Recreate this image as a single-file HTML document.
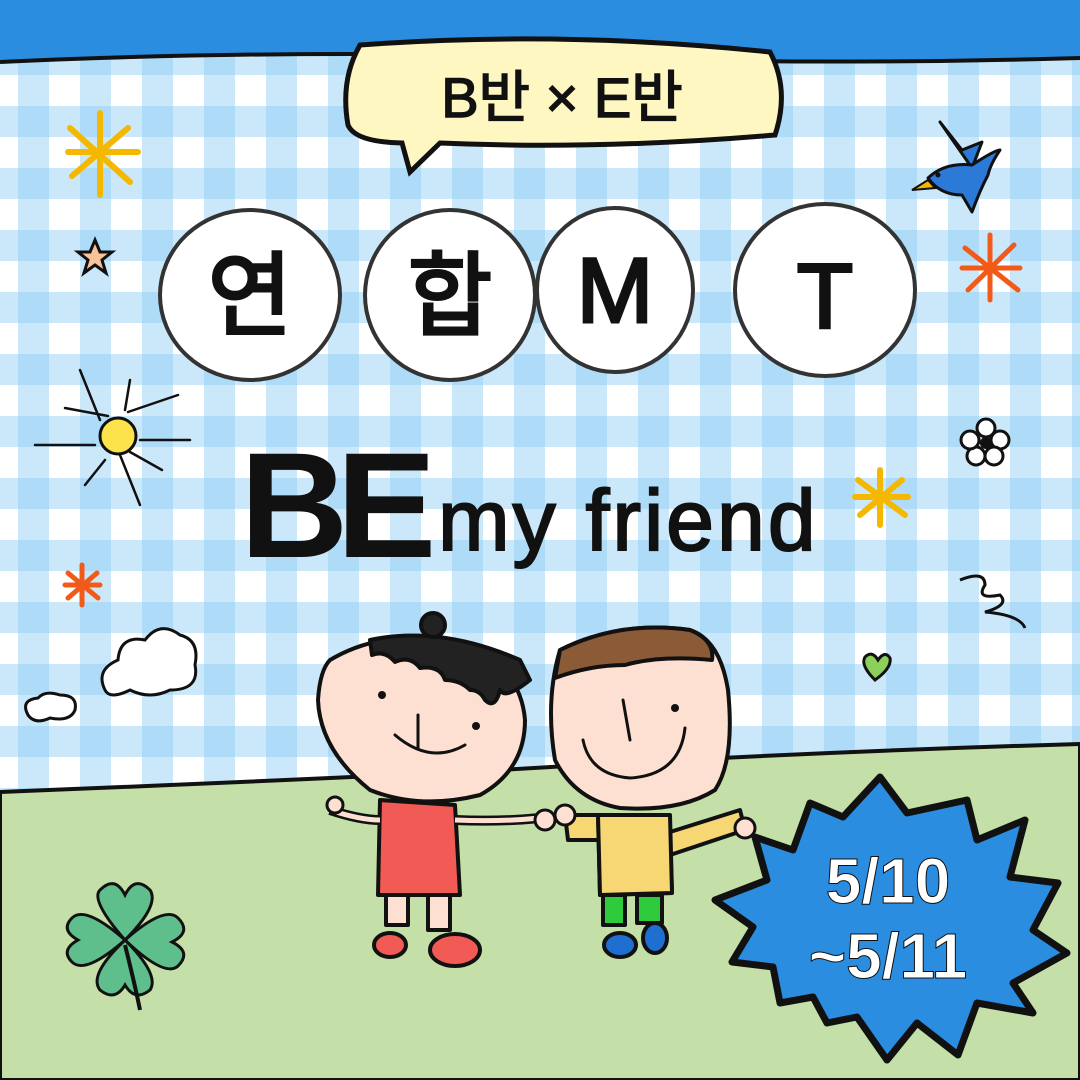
<!DOCTYPE html>
<html><head><meta charset="utf-8"><style>
html,body{margin:0;padding:0}
body{width:1080px;height:1080px;overflow:hidden;position:relative;font-family:"Liberation Sans","Noto Sans CJK KR",sans-serif}
.bg{position:absolute;inset:0;background-color:#fff;
background-image:
linear-gradient(90deg, rgba(140,205,245,.45) 0 31px, transparent 31px 62px),
linear-gradient(0deg, rgba(140,205,245,.45) 0 31px, transparent 31px 62px);
background-size:62px 62px,62px 62px;background-position:18px 0,0 13px}
svg{position:absolute;left:0;top:0}
</style></head><body>
<div class="bg"></div>
<svg width="1080" height="1080" viewBox="0 0 1080 1080">
<path d="M0 0H1080V58Q800 66 540 56Q250 50 0 62Z" fill="#2b8de0"/>
<path d="M0 62Q250 50 540 56Q800 66 1080 58" fill="none" stroke="#111" stroke-width="4"/>
<path d="M0 792Q300 780 500 770Q800 752 1080 744V1080H0Z" fill="#c4dfa8" stroke="#111" stroke-width="4"/>
<path d="M360 45Q560 30 770 52Q790 90 775 135Q600 150 440 143L410 172L402 143Q355 142 348 125Q340 80 360 45Z" fill="#fff7c2" stroke="#111" stroke-width="5"/>
<text x="562" y="117" font-size="56" text-anchor="middle" fill="#111" stroke="#111" stroke-width="1.5">B반 × E반</text>
<g fill="#fff" stroke="#333" stroke-width="4">
<ellipse cx="250" cy="295" rx="90" ry="85"/>
<ellipse cx="450" cy="295" rx="85" ry="85"/>
<ellipse cx="615" cy="290" rx="78" ry="82"/>
<ellipse cx="825" cy="290" rx="90" ry="86"/>
</g>
<g font-size="92" text-anchor="middle" fill="#111" stroke="#111" stroke-width="3">
<text x="250" y="328">연</text><text x="450" y="328">합</text>
<text x="615" y="322">M</text><text x="825" y="328">T</text>
</g>
<text x="240" y="557" font-size="150" font-weight="bold" fill="#111" letter-spacing="-12">BE</text>
<text x="438" y="550" font-size="86" fill="#111" letter-spacing="3" stroke="#111" stroke-width="2">my friend</text>
<g stroke="#f5b800" stroke-width="6" stroke-linecap="round">
<path d="M100 113V195M70 128L130 182M68 152H138M72 176L128 128"/>
<path d="M880 470V525M858 480L905 515M855 497H908M860 515L902 480"/>
</g>
<g stroke="#f25a1a" stroke-width="5" stroke-linecap="round">
<path d="M990 235V300M965 248L1018 290M962 268H1020M968 290L1014 245"/>
<path d="M82 565V605M68 573L98 598M65 585H100M68 598L97 573"/>
</g>
<path d="M95 240L100 252L112 252L102 260L106 273L95 265L84 273L88 260L78 252L90 252Z" fill="#f8c29a" stroke="#111" stroke-width="3"/>
<circle cx="118" cy="436" r="18" fill="#fde34b" stroke="#111" stroke-width="3"/>
<g stroke="#111" stroke-width="2.5" stroke-linecap="round"><path d="M35 445H95M140 440H190M128 412L178 395M130 452L162 470M120 455L140 505M105 460L85 485M100 420L80 370M125 410L130 380M108 416L65 408"/></g>
<!-- bird -->
<path d="M940 122L962 150L982 142L972 168Z" fill="#2b7ad8" stroke="#111" stroke-width="3" stroke-linejoin="round"/>
<path d="M928 178Q945 162 972 165Q995 150 1000 150Q990 165 988 175Q980 190 972 212L962 195Q940 195 928 178Z" fill="#2b7ad8" stroke="#111" stroke-width="3" stroke-linejoin="round"/>
<circle cx="938" cy="175" r="2.5" fill="#111"/>
<path d="M928 180L912 190L935 188Z" fill="#f5b800" stroke="#111" stroke-width="2"/>
<g fill="#fff" stroke="#111" stroke-width="3"><circle cx="986" cy="428" r="9"/><circle cx="1000" cy="440" r="9"/><circle cx="994" cy="456" r="9"/><circle cx="976" cy="456" r="9"/><circle cx="970" cy="440" r="9"/></g>
<circle cx="986" cy="443" r="6" fill="#111"/>
<path d="M960 580Q985 570 985 585Q975 600 1000 595Q1010 605 985 612Q1020 615 1025 628" fill="none" stroke="#111" stroke-width="3"/>
<path d="M875 680Q860 665 865 657Q872 650 878 660Q885 650 890 658Q892 668 875 680Z" fill="#8ccf5a" stroke="#111" stroke-width="3"/>
<path d="M105 690Q95 670 118 660Q120 635 145 640Q160 620 180 635Q200 640 195 665Q200 690 170 690Q150 700 130 690Q110 700 105 690Z" fill="#fff" stroke="#111" stroke-width="3"/>
<path d="M28 715Q20 700 38 698Q45 690 60 695Q78 695 75 710Q70 722 50 718Q35 725 28 715Z" fill="#fff" stroke="#111" stroke-width="3"/>
<g fill="#5fbf8c" stroke="#111" stroke-width="3">
<path d="M125 940Q90 900 100 890Q115 875 125 895Q135 875 150 890Q160 905 125 940Z"/>
<path d="M125 940Q165 905 178 918Q192 932 172 942Q192 952 178 966Q165 978 125 940Z"/>
<path d="M125 940Q160 975 150 990Q135 1002 125 985Q115 1002 100 990Q88 975 125 940Z"/>
<path d="M125 940Q85 975 72 962Q60 950 78 940Q60 930 72 918Q85 905 125 940Z"/>
</g>
<path d="M125 945Q135 985 140 1010" stroke="#111" stroke-width="4" fill="none"/>
<g stroke="#111" stroke-width="4" stroke-linejoin="round">
<path d="M380 800L455 805L460 895L378 895Z" fill="#f25a55"/>
<rect x="386" y="895" width="22" height="30" fill="#fde0d2"/><rect x="428" y="895" width="22" height="35" fill="#fde0d2"/>
<ellipse cx="390" cy="945" rx="16" ry="12" fill="#f25a55"/><ellipse cx="455" cy="950" rx="25" ry="16" fill="#f25a55"/>
<path d="M330 810Q360 820 380 820M455 820Q500 822 540 818" fill="none" stroke-width="10"/>
<path d="M330 810Q360 820 380 820M455 820Q500 822 540 818" fill="none" stroke="#fde0d2" stroke-width="5"/>
<path d="M330 660Q380 630 450 640Q520 660 525 720Q525 770 480 795Q420 810 370 790Q320 750 318 700Q320 670 330 660Z" fill="#fde0d2"/>
<path d="M370 640Q440 625 520 660L530 680Q505 700 500 690Q495 710 485 700Q480 690 470 690Q460 680 445 680Q440 665 420 668Q410 655 395 662Q385 650 372 655Z" fill="#222"/>
<circle cx="433" cy="625" r="12" fill="#222"/>
</g>
<g fill="none" stroke="#111" stroke-width="3" stroke-linecap="round"><path d="M395 735Q430 765 465 745M418 715V748"/></g>
<circle cx="382" cy="695" r="4" fill="#111"/><circle cx="476" cy="726" r="4" fill="#111"/>
<g stroke="#111" stroke-width="4" stroke-linejoin="round">
<rect x="603" y="895" width="22" height="30" fill="#2ecb3c"/><rect x="637" y="895" width="25" height="28" fill="#2ecb3c"/>
<ellipse cx="620" cy="945" rx="16" ry="12" fill="#1f6fd0"/><ellipse cx="655" cy="938" rx="12" ry="15" fill="#1f6fd0"/>
<path d="M565 815L598 815L600 895L672 893L670 832L740 810L745 830L670 855L598 840L568 840Z" fill="#f7d774"/>
<path d="M598 815L670 815L672 893L600 895Z" fill="#f7d774"/>
<path d="M560 650Q620 620 690 630Q720 640 728 690Q735 760 715 790Q680 812 620 808Q575 800 555 760Q545 700 560 650Z" fill="#fde0d2"/>
<path d="M560 650Q620 620 690 630Q715 640 712 660Q660 655 625 665Q590 665 555 678Z" fill="#8b5a36"/>
</g>
<g fill="none" stroke="#111" stroke-width="3" stroke-linecap="round"><path d="M583 740Q590 775 630 778Q680 775 685 728M623 700L630 740"/></g>
<circle cx="675" cy="708" r="4" fill="#111"/>
<g fill="#fde0d2" stroke="#111" stroke-width="3"><circle cx="545" cy="820" r="10"/><circle cx="565" cy="815" r="10"/><circle cx="745" cy="828" r="10"/><circle cx="335" cy="805" r="8"/></g>
<path d="M880 777L907 813L967 800L977 840L1025 820L1010 877L1058 883L1033 930L1067 953L1013 983L1033 1013L977 1003L958 1055L917 1023L887 1060L857 1017L827 1023L813 997L780 1003L773 967L732 962L753 927L715 900L767 880L755 837L793 850L810 803L843 817Z" fill="#2b8de0" stroke="#111" stroke-width="7" stroke-linejoin="round"/>
<text x="888" y="903" font-size="64" font-weight="bold" fill="#fff" text-anchor="middle" stroke="#111" stroke-width="1">5/10</text>
<text x="888" y="978" font-size="64" font-weight="bold" fill="#fff" text-anchor="middle" stroke="#111" stroke-width="1">~5/11</text>
</svg>
</body></html>
